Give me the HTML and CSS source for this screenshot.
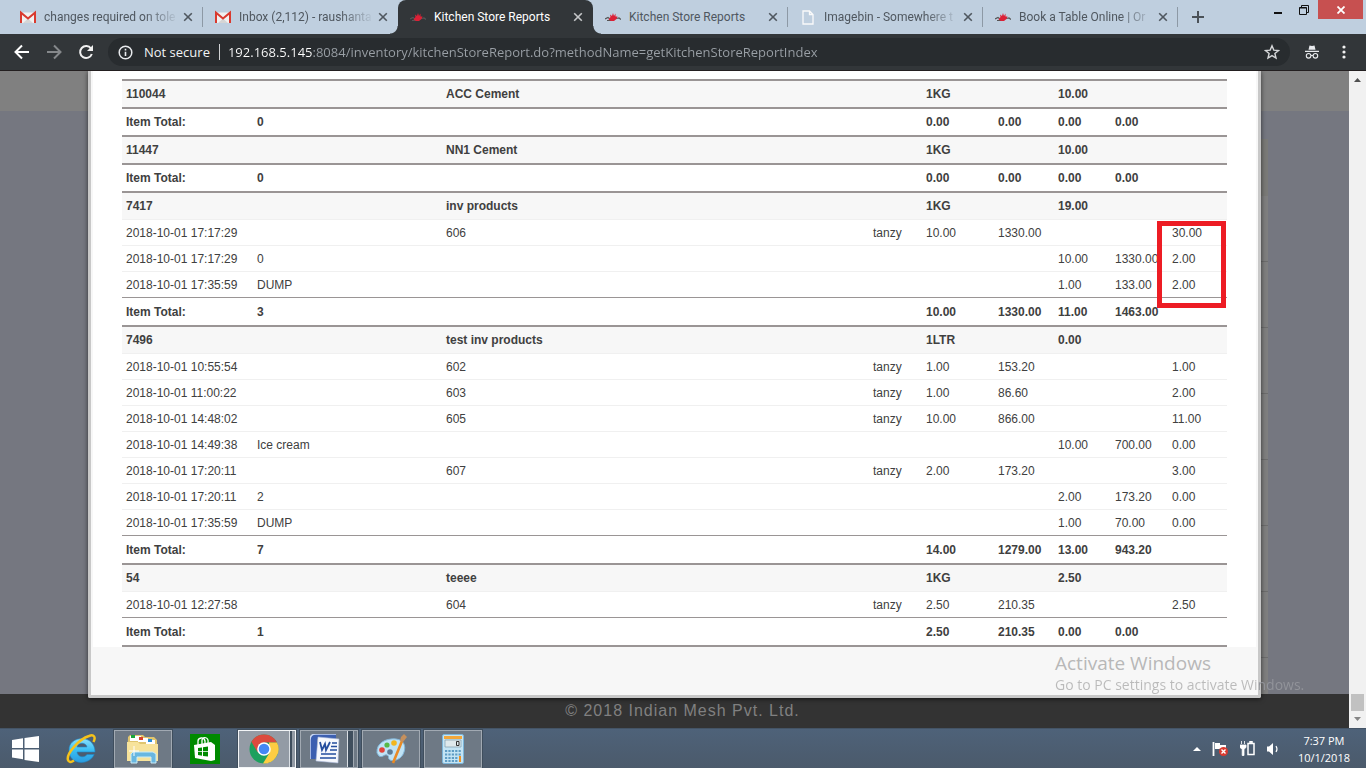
FILE: index.html
```html
<!DOCTYPE html>
<html lang="en">
<head>
<meta charset="utf-8">
<title>Kitchen Store Reports</title>
<link rel="stylesheet" href="styles.css">
</head>
<body>
<svg class="defs" aria-hidden="true">
  <symbol id="gmail" viewBox="0 0 16 12"><path d="M1 1h14v10.500H1z" fill="#f1f1f1"/><path d="M3 11.500 8 7l5 4.500z" fill="#d5d5d5"/><path d="M1 11.500V1.200L8 7l7-5.800v10.300" fill="none" stroke="#d93a2f" stroke-width="2"/></symbol>
  <symbol id="close" viewBox="0 0 10 10"><path d="M1.200 1.200l7.600 7.600M8.800 1.200 1.200 8.800" stroke="currentColor" stroke-width="1.600" fill="none"/></symbol>
  <symbol id="mesh" viewBox="0 0 16 10"><path d="M0 6.500l3-1.500 2 1.500M11 6l3-.5 2 1.500M2 8h4" stroke="#555" stroke-width="1.200" fill="none"/><path d="M3.500 7 5.500 4.500 5 2l2 1.500L8 .5l1 3 1.500-2.500v3L12.500 4l-1 2.500L9 8.500H6z" fill="#dc2036"/></symbol>
  <symbol id="doc" viewBox="0 0 12 15"><path d="M1 1h6.500L11 4.500V14H1zM7.500 1v3.500H11" fill="none" stroke="#fafafa" stroke-width="1.300"/></symbol>
</svg>

<header class="tabstrip">
  <nav class="tabs" aria-label="Tabs">
    <div class="tab"><svg class="favicon"><use href="#gmail"/></svg><a class="tab-title faded" href="#t1">changes required on tole</a><button class="tab-close" aria-label="Close tab"><svg><use href="#close"/></svg></button></div>
    <div class="tab no-rule"><svg class="favicon"><use href="#gmail"/></svg><a class="tab-title faded" href="#t2">Inbox (2,112) - raushanta</a><button class="tab-close" aria-label="Close tab"><svg><use href="#close"/></svg></button></div>
    <div class="tab active"><svg class="favicon"><use href="#mesh"/></svg><a class="tab-title" href="#t3">Kitchen Store Reports</a><button class="tab-close" aria-label="Close tab"><svg><use href="#close"/></svg></button></div>
    <div class="tab"><svg class="favicon"><use href="#mesh"/></svg><a class="tab-title" href="#t4">Kitchen Store Reports</a><button class="tab-close" aria-label="Close tab"><svg><use href="#close"/></svg></button></div>
    <div class="tab"><svg class="favicon"><use href="#doc"/></svg><a class="tab-title faded" href="#t5">Imagebin - Somewhere t</a><button class="tab-close" aria-label="Close tab"><svg><use href="#close"/></svg></button></div>
    <div class="tab"><svg class="favicon"><use href="#mesh"/></svg><a class="tab-title faded" href="#t6">Book a Table Online | Or</a><button class="tab-close" aria-label="Close tab"><svg><use href="#close"/></svg></button></div>
  </nav>
  <button class="new-tab" aria-label="New tab"><svg viewBox="0 0 12 12" width="12" height="12"><path d="M6 0v12M0 6h12" stroke="#4b5258" stroke-width="2"/></svg></button>
  <div class="window-controls">
    <button aria-label="Minimize"><svg width="10" height="12" viewBox="0 0 10 12"><path d="M1 9h8" stroke="#111" stroke-width="2"/></svg></button>
    <button aria-label="Restore"><svg width="10" height="10" viewBox="0 0 10 10"><path d="M.5 2.500h7v7h-7zM.5 3h7" fill="none" stroke="#111"/><path d="M2.500 2V.5h7v7H8" fill="none" stroke="#111"/></svg></button>
    <button class="win-close" aria-label="Close"><svg width="8" height="8" viewBox="0 0 8 8"><path d="M.5.5l7 7M7.500.5l-7 7" stroke="#fff" stroke-width="1.800"/></svg></button>
  </div>
</header>

<div class="toolbar">
  <button aria-label="Back"><svg width="16" height="16" viewBox="0 0 16 16"><path d="M15 8H2M8 1.500 1.500 8 8 14.500" fill="none" stroke="#fff" stroke-width="2"/></svg></button>
  <button aria-label="Forward"><svg width="16" height="16" viewBox="0 0 16 16"><path d="M1 8h13M8 1.500 14.500 8 8 14.500" fill="none" stroke="#85888b" stroke-width="2"/></svg></button>
  <button aria-label="Reload"><svg width="16" height="16" viewBox="0 0 16 16"><path d="M13 4.500A6 6 0 1 0 13.800 10" fill="none" stroke="#f1f1f1" stroke-width="2"/><path d="M15 1v6H9z" fill="#f1f1f1"/></svg></button>
  <div class="omnibox">
    <svg width="15" height="15" viewBox="0 0 15 15"><circle cx="7.500" cy="7.500" r="6.300" fill="none" stroke="#e8eaed" stroke-width="1.500"/><path d="M7.500 6.700V11M7.500 3.800v1.600" stroke="#e8eaed" stroke-width="1.600"/></svg>
    <label class="security" for="url">Not secure</label>
    <input class="url" id="url" type="text" value="192.168.5.145:8084/inventory/kitchenStoreReport.do?methodName=getKitchenStoreReportIndex">
    <button class="star" aria-label="Bookmark this page"><svg width="16" height="16" viewBox="0 0 16 16"><path d="M8 1.800l1.800 4.300 4.700.4-3.600 3 1.100 4.600L8 11.600l-4 2.500 1.100-4.600-3.600-3 4.700-.4z" fill="none" stroke="#d5d7d9" stroke-width="1.400"/></svg></button>
  </div>
  <button class="incognito" aria-label="Incognito"><svg width="14" height="14" viewBox="0 0 14 14"><path d="M3.500 4.800 4.500.5 7 1.100 9.500.5l1 4.300zM0 5.800h14v1.100H0z" fill="#e8eaed"/><circle cx="3.600" cy="10.800" r="2.300" fill="none" stroke="#e8eaed" stroke-width="1.100"/><circle cx="10.400" cy="10.800" r="2.300" fill="none" stroke="#e8eaed" stroke-width="1.100"/><path d="M6 10.500h2" stroke="#e8eaed"/></svg></button>
  <button class="menu" aria-label="Menu"><svg width="4" height="14" viewBox="0 0 4 14"><g fill="#f1f1f1"><circle cx="2" cy="2" r="1.600"/><circle cx="2" cy="7" r="1.600"/><circle cx="2" cy="12" r="1.600"/></g></svg></button>
</div>

<div class="viewport">
  <div class="page">
    <div class="page-band"></div>
    <div class="page-body"><div class="page-panel"></div></div>
    <footer class="page-footer">© 2018 Indian Mesh Pvt. Ltd.</footer>

    <section class="modal" role="dialog" aria-label="Kitchen Store Report">
      <div class="report-wrap"><div class="report-box">
        <table class="report">
          <colgroup><col class="c-date"><col class="c-ref"><col><col class="c-user"><col class="c-qty"><col class="c-amt"><col class="c-out"><col class="c-out"><col class="c-bal"></colgroup>
          <tbody>
            <tr class="head"><td>110044</td><td></td><td>ACC Cement</td><td></td><td>1KG</td><td></td><td>10.00</td><td></td><td></td></tr>
            <tr class="total"><td>Item Total:</td><td>0</td><td></td><td></td><td>0.00</td><td>0.00</td><td>0.00</td><td>0.00</td><td></td></tr>
            <tr class="head"><td>11447</td><td></td><td>NN1 Cement</td><td></td><td>1KG</td><td></td><td>10.00</td><td></td><td></td></tr>
            <tr class="total"><td>Item Total:</td><td>0</td><td></td><td></td><td>0.00</td><td>0.00</td><td>0.00</td><td>0.00</td><td></td></tr>
            <tr class="head"><td>7417</td><td></td><td>inv products</td><td></td><td>1KG</td><td></td><td>19.00</td><td></td><td></td></tr>
            <tr class="entry"><td>2018-10-01 17:17:29</td><td></td><td>606</td><td>tanzy</td><td>10.00</td><td>1330.00</td><td></td><td></td><td>30.00</td></tr>
            <tr class="entry"><td>2018-10-01 17:17:29</td><td>0</td><td></td><td></td><td></td><td></td><td>10.00</td><td>1330.00</td><td>2.00</td></tr>
            <tr class="entry"><td>2018-10-01 17:35:59</td><td>DUMP</td><td></td><td></td><td></td><td></td><td>1.00</td><td>133.00</td><td>2.00</td></tr>
            <tr class="total"><td>Item Total:</td><td>3</td><td></td><td></td><td>10.00</td><td>1330.00</td><td>11.00</td><td>1463.00</td><td></td></tr>
            <tr class="head"><td>7496</td><td></td><td>test inv products</td><td></td><td>1LTR</td><td></td><td>0.00</td><td></td><td></td></tr>
            <tr class="entry"><td>2018-10-01 10:55:54</td><td></td><td>602</td><td>tanzy</td><td>1.00</td><td>153.20</td><td></td><td></td><td>1.00</td></tr>
            <tr class="entry"><td>2018-10-01 11:00:22</td><td></td><td>603</td><td>tanzy</td><td>1.00</td><td>86.60</td><td></td><td></td><td>2.00</td></tr>
            <tr class="entry"><td>2018-10-01 14:48:02</td><td></td><td>605</td><td>tanzy</td><td>10.00</td><td>866.00</td><td></td><td></td><td>11.00</td></tr>
            <tr class="entry"><td>2018-10-01 14:49:38</td><td>Ice cream</td><td></td><td></td><td></td><td></td><td>10.00</td><td>700.00</td><td>0.00</td></tr>
            <tr class="entry"><td>2018-10-01 17:20:11</td><td></td><td>607</td><td>tanzy</td><td>2.00</td><td>173.20</td><td></td><td></td><td>3.00</td></tr>
            <tr class="entry"><td>2018-10-01 17:20:11</td><td>2</td><td></td><td></td><td></td><td></td><td>2.00</td><td>173.20</td><td>0.00</td></tr>
            <tr class="entry"><td>2018-10-01 17:35:59</td><td>DUMP</td><td></td><td></td><td></td><td></td><td>1.00</td><td>70.00</td><td>0.00</td></tr>
            <tr class="total"><td>Item Total:</td><td>7</td><td></td><td></td><td>14.00</td><td>1279.00</td><td>13.00</td><td>943.20</td><td></td></tr>
            <tr class="head"><td>54</td><td></td><td>teeee</td><td></td><td>1KG</td><td></td><td>2.50</td><td></td><td></td></tr>
            <tr class="entry"><td>2018-10-01 12:27:58</td><td></td><td>604</td><td>tanzy</td><td>2.50</td><td>210.35</td><td></td><td></td><td>2.50</td></tr>
            <tr class="total"><td>Item Total:</td><td>1</td><td></td><td></td><td>2.50</td><td>210.35</td><td>0.00</td><td>0.00</td><td></td></tr>
          </tbody>
        </table>
        <div class="highlight"></div>
      </div></div>
      <div class="modal-footer"></div>
    </section>
  </div>
  <div class="scrollbar">
    <svg width="7" height="4" viewBox="0 0 7 4"><path d="M0 4 3.500 0 7 4z" fill="#505050"/></svg>
    <span class="thumb"></span>
    <svg width="7" height="4" viewBox="0 0 7 4"><path d="M0 0h7L3.500 4z" fill="#858585"/></svg>
  </div>
  <div class="watermark"><strong>Activate Windows</strong><span>Go to PC settings to activate Windows.</span></div>
</div>

<footer class="taskbar">
  <div class="apps">
    <button class="start" aria-label="Start"><svg width="27" height="26" viewBox="0 0 27 26"><path d="M0 4 11 2.300V12H0zM12.500 2 27 0v12H12.500zM0 13.500h11v9.700L0 21.500zM12.500 13.500H27V26l-14.500-2z" fill="#fff"/></svg></button>
    <button class="plain" aria-label="Internet Explorer"><svg width="32" height="32" viewBox="0 0 32 32"><defs><linearGradient id="ie" x2="0" y2="1"><stop offset="0" stop-color="#8ce0fb"/><stop offset=".5" stop-color="#38bdf3"/><stop offset="1" stop-color="#2a9be0"/></linearGradient></defs><path d="M30 19H12c.5 5 7 6.500 10 2.500h7.200C24 33 4 32.500 4 17 4 2 30 1 30 19zM12 14h10c-1-5-9-5-10 0z" fill="url(#ie)" stroke="#1e86c8" stroke-width=".6" fill-rule="evenodd"/><path d="M28.500 9C31 4 29 1 24 3 14 6 1 21 3 27c.7 2.500 3 2.500 6 .5" fill="none" stroke="#f5c21b" stroke-width="2.500"/></svg></button>
    <button class="open" aria-label="File Explorer"><svg width="34" height="30" viewBox="0 0 34 30"><path d="M2 3 4 1h13l2 2h9l3 3v21H1z" fill="#e0c56e"/><path d="M4 2h11v5H4zM12 4h10v4H12zM20 6h9v4h-9z" fill="#fff"/><path d="M5 1h4v3H5z" fill="#19a63b"/><path d="M13 3h4v3h-4z" fill="#d8422a"/><path d="M22 5h4v3h-4z" fill="#2a8ed8"/><path d="M1 8h11l2 2h18v17H1z" fill="#f7e39b"/><path d="M5 29V20l2-2h20l3 2v9h-5v-6H11v6z" fill="#69b7e0" stroke="#c9ecf9"/><path d="M8 12v10M3 17h10" stroke="#fff"/></svg></button>
    <button class="plain store" aria-label="Store"><svg width="30" height="30" viewBox="0 0 30 30"><path d="M0 0h30v30H0z" fill="#008a00"/><path d="M8 11V7c0-3 6-5 7 0v3M12 10V6c1-4 7-3 6 3" fill="none" stroke="#fff" stroke-width="1.300"/><path d="M4 11l17-3 4 3v15l-4 1-16-3z" fill="#fff"/><path d="M8 14l4-.6v3.800H8zM13 13.200l5-.7v4.700h-5zM8 18h4v3.700L8 21zM13 18h5v4.600l-5-.7z" fill="#008a00"/></svg></button>
    <button class="open current stacked" aria-label="Chrome"><svg width="30" height="30" viewBox="0 0 30 30"><circle cx="15" cy="15" r="14.500" fill="#1da05e"/><path d="M2.400 7.800A14.500 14.500 0 0 1 28 8.500H15L8.500 18z" fill="#dc4a3e"/><path d="M28 8.500A14.500 14.500 0 0 1 14 29.500L21 18 20 8.500z" fill="#fecd42"/><circle cx="15" cy="15" r="6.800" fill="#fff"/><circle cx="15" cy="15" r="5.300" fill="#4587f4"/></svg></button>
    <button class="open stacked double" aria-label="Word"><svg width="30" height="30" viewBox="0 0 30 30"><path d="M0 25V6q0-6 6-6h20v5H7v20z" fill="#3c5fb0"/><path d="M0 25V6q0-6 6-6h20" fill="none" stroke="#c6d5f2" stroke-width="1.500"/><path d="M8 3l21 2-1 24-22-2z" fill="#f6f8fd" stroke="#a7b7d8" stroke-width=".6"/><path d="M10 8l2 8 3-6 1 6 4-8" fill="none" stroke="#244d9e" stroke-width="1.800"/><path d="M22 9h5M21 12.500h6M20 16h7M11 20h15M10 24h16" stroke="#244d9e" stroke-width="1.600"/></svg></button>
    <button class="open" aria-label="Paint"><svg width="31" height="31" viewBox="0 0 31 31"><path d="M1 20C0 10 10 5 20 6c8 1 10 7 8 13-2 7-10 10-14 8-3-2 0-4-3-5s-4 3-8 1z" fill="#bfe3f6" stroke="#82b7da"/><circle cx="6" cy="17" r="2.800" fill="#e2443b"/><circle cx="11" cy="12" r="2.600" fill="#58b947"/><circle cx="18" cy="10" r="2.800" fill="#f2b61f"/><circle cx="14" cy="19" r="2.800" fill="#5d7b94"/><path d="M26 8 17 30" stroke="#e98a24" stroke-width="2.600"/><path d="M24 8l1-4 3-3 3 3-4 5z" fill="#c5905d"/></svg></button>
    <button class="open" aria-label="Calculator"><svg width="22" height="30" viewBox="0 0 22 30"><rect x=".5" y=".5" width="21" height="29" rx="1.500" fill="#c4e4f4" stroke="#7bb4d8"/><path d="M2 2h18v3H2z" fill="#f2a73b"/><path d="M3 6h16v7H3z" fill="#dfe9ec" stroke="#7e9bab" stroke-width=".7"/><path d="M14.500 7.500h2.500v4h-2.500z" fill="none" stroke="#333"/><path d="M3 17h16M3 20.500h16M3 24h13M3 27h13" stroke="#5e9cc4" stroke-width="2" stroke-dasharray="2.200 1.200"/><path d="M18 22v6" stroke="#ef9022" stroke-width="2"/></svg></button>
  </div>
  <div class="tray">
    <svg width="8" height="4" viewBox="0 0 8 4"><path d="M0 4 4 0l4 4z" fill="#fff"/></svg>
    <svg width="17" height="16" viewBox="0 0 17 16"><path d="M1.500 1v14" stroke="#fff" stroke-width="1.800"/><path d="M3 2h5v2h6v6H8V8H3z" fill="#fff"/><circle cx="11.500" cy="10.500" r="4.500" fill="#d93a30"/><path d="M9.500 8.500l4 4M13.500 8.500l-4 4" stroke="#fff" stroke-width="1.400"/></svg>
    <svg width="15" height="15" viewBox="0 0 15 15"><path d="M1.500 0v3M4.500 0v3M0 4h6v2.500L4 8v6.500H2.200V8L0 6.500z" fill="#fff" stroke="#fff" stroke-width=".8"/><path d="M8 2.500h6v11H8zM10 2V.7h2V2" fill="none" stroke="#fff" stroke-width="1.500"/></svg>
    <svg width="14" height="14" viewBox="0 0 14 14"><path d="M1 4.500h2L7 1v12L3 9.500H1z" fill="#fff"/><path d="M10 4q2 3 0 6" fill="none" stroke="#fff" stroke-width="1.200"/></svg>
    <div class="clock"><span>7:37 PM</span><span>10/1/2018</span></div>
  </div>
</footer>
</body>
</html>
```
FILE: styles.css
```css
* { box-sizing: border-box; }
body {
  margin: 0;
  height: 100vh;
  display: flex;
  flex-direction: column;
  overflow: hidden;
  font-family: "Open Sans", "Noto Sans", sans-serif;
  font-size: 12px;
}
button { border: 0; padding: 0; background: none; display: flex; align-items: center; justify-content: center; flex: none; }
svg { display: block; flex: none; }
.defs { position: absolute; width: 0; height: 0; }

/* Tab strip */
.tabstrip { display: flex; height: 34px; background: #bfcfdf; padding-left: 8px; flex: none; font-family: Roboto, "Open Sans", sans-serif; }
.tabs { display: flex; flex: 0 1 1170px; min-width: 0; }
.tab { position: relative; display: flex; align-items: center; flex: 1 1 0; min-width: 0; padding: 0 10px 0 12px; color: #4f575f; }
.tab::after { content: ""; width: 1px; height: 20px; background: #8d99a5; position: absolute; right: 0; }
.tab.no-rule::after { display: none; }
.tab.active { background: #323639; color: #fff; border-radius: 8px 8px 0 0; }
.tab.active::before, .tab.active::after { content: ""; position: absolute; bottom: 0; width: 8px; height: 8px; }
.tab.active::before { left: -8px; background: radial-gradient(circle at 0 0, transparent 7px, #323639 8px); }
.tab.active::after { right: -8px; background: radial-gradient(circle at 100% 0, transparent 7px, #323639 8px); }
.favicon { width: 16px; height: 15px; margin-right: 8px; }
.tab-title { flex: 1; min-width: 0; overflow: hidden; white-space: nowrap; color: inherit; text-decoration: none; margin-right: 4px; line-height: 20px; }
.faded { -webkit-mask-image: linear-gradient(90deg, #000 75%, transparent); mask-image: linear-gradient(90deg, #000 75%, transparent); }
.tab-close { color: #4f575f; }
.active .tab-close { color: #c5c7c9; }
.tab-close svg { width: 10px; height: 10px; }
.new-tab { width: 40px; }
.window-controls { display: flex; align-items: flex-start; margin-left: auto; padding-right: 3px; }
.window-controls button { width: 26px; height: 19px; }
.window-controls .win-close { width: 45px; margin-left: 1px; background: #c75050; }

/* Toolbar */
.toolbar { display: flex; align-items: center; height: 37px; flex: none; gap: 16px; padding: 0 20px 0 14px; background: #323639; border-bottom: 1px solid #231f20; }
.omnibox { display: flex; align-items: center; flex: 1; min-width: 0; height: 28px; margin: 0 -1px 0 -2px; padding: 0 10px; border-radius: 14px; background: #282c2f; font-size: 13px; }
.security { color: #f1f3f4; padding: 0 9px; border-right: 1px solid #d0d2d4; line-height: 16px; margin-left: 2px; }
.url {
  flex: 1; min-width: 0; border: 0; outline: 0; padding: 0 0 0 8px; font: inherit; line-height: 20px;
  color: transparent;
  background: linear-gradient(90deg, #fff 93px, #9aa0a6 93px);
  -webkit-background-clip: text; background-clip: text;
}
.menu { margin-left: 7px; }

/* Viewport and the dimmed page */
.viewport { position: relative; display: flex; flex: 1; min-height: 0; }
.page { position: relative; display: flex; flex-direction: column; flex: 1; min-width: 0; overflow: hidden; }
.page-band { height: 40px; background: #808080; }
.page-body { flex: 1; background: #757780; padding: 28px 81px 0 96px; display: flex; }
.page-panel { flex: 1; background: linear-gradient(#7a7a77 57px, transparent 57px), repeating-linear-gradient(#7f7f7f 0 56px, #6d6d6d 56px 57px, #7f7f7f 57px 66px); }
.page-footer { height: 34px; background: #333; color: #808080; text-align: center; font: 16px/34px "Liberation Sans", sans-serif; letter-spacing: 1px; padding-left: 16px; }
.scrollbar { display: flex; flex-direction: column; align-items: center; width: 17px; background: #f1f1f1; padding: 7px 0; }
.thumb { width: 13px; height: 17px; margin: auto 0 6px; background: #c1c1c1; }

/* Report dialog */
.modal { position: absolute; top: 0; left: 88px; right: 88px; border: 3px solid #c8c8c8; border-top: 0; border-radius: 0 0 2px 2px; background: #f7f7f7; box-shadow: 0 1px 5px rgba(0, 0, 0, .6); padding: 0 2px; }
.report-wrap { background: #fff; padding: 8px 29px 0; }
.report-box { position: relative; }
.modal-footer { height: 48px; }
.report { width: 100%; table-layout: fixed; border-collapse: separate; border-spacing: 0; border-bottom: 2px solid #9a9595; font: 12px/16px "Liberation Sans", Arial, sans-serif; color: #404040; }
.report td { padding: 0 4px; height: 26px; border-top: 1px solid #f0f0f0; white-space: nowrap; }
.report .head td, .report .total td { height: 28px; border-top: 2px solid #9a9595; font-weight: bold; }
.report .head td { background: #f7f7f7; }
.report .entry + .total td { border-top-width: 1px; }
.c-date { width: 131px; }
.c-ref { width: 189px; }
.c-user { width: 53px; }
.c-qty { width: 72px; }
.c-amt { width: 60px; }
.c-out { width: 57px; }
.c-bal { width: 59px; }
.highlight { position: absolute; top: 142px; right: 1px; width: 69px; height: 87px; border: 5px solid #ed1c24; }

.watermark { position: absolute; right: 56px; bottom: 34px; width: 255px; display: flex; flex-direction: column; font-size: 14px; line-height: 18px; pointer-events: none; }
.watermark strong { font-size: 19px; line-height: 26px; font-weight: 400; color: #b8b8b8; }
.watermark span { background: linear-gradient(90deg, #bababa 204px, #92949a 204px); -webkit-background-clip: text; background-clip: text; color: transparent; white-space: nowrap; }

/* Taskbar */
.taskbar { display: flex; justify-content: space-between; height: 40px; flex: none; background: linear-gradient(#4e6279, #4b5a6b); border-top: 1px solid #445466; }
.apps { display: flex; align-items: center; gap: 4px; padding-left: 10px; }
.apps button { width: 58px; height: 38px; }
.apps .start { width: 30px; margin-right: 8px; }
.apps .open { background: #6e7985; border: 1px solid #a1a9b2; outline: 1px solid #3f4e5d; }
.apps .current { background: #939ba5; border-color: #f3f5f7; }
.apps .stacked { position: relative; padding-right: 6px; }
.apps .stacked::after { content: ""; position: absolute; top: 0; bottom: 0; right: 3px; width: 2px; background: #3f4e5d; border-left: 1px solid #d9dee3; }
.apps .double { padding-right: 8px; }
.apps .double::after { width: 5px; border-right: 1px solid #a1a9b2; }
.tray { display: flex; align-items: center; gap: 11px; padding-right: 16px; color: #fff; }
.clock { display: flex; flex-direction: column; align-items: center; font-size: 11px; line-height: 17px; margin-left: 7px; }
```
